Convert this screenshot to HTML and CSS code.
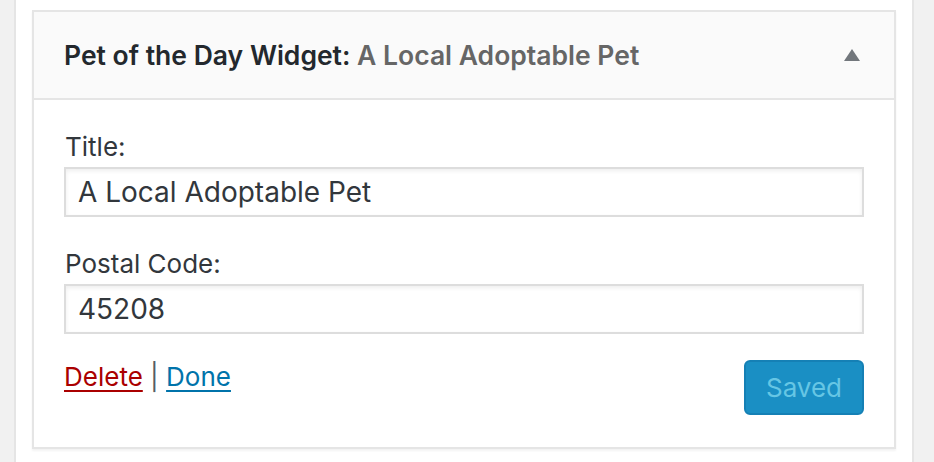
FILE: index.html
```html
<!DOCTYPE html>
<html>
<head>
<meta charset="utf-8">
<link rel="stylesheet" href="styles.css">
</head>
<body>
<div class="sidebar">
  <div class="widget">
    <div class="widget-top">
      <h3 class="widget-title">Pet of the Day Widget:<span class="in-title"> A Local Adoptable Pet</span></h3>
      <span class="toggle" aria-hidden="true"></span>
    </div>
    <div class="widget-inside">
      <label class="field-label" for="t">Title:</label>
      <input class="field" id="t" type="text" value="A Local Adoptable Pet">
      <label class="field-label second" for="p">Postal Code:</label>
      <input class="field" id="p" type="text" value="45208">
      <div class="widget-control">
        <div class="actions"><a class="delete" href="#">Delete</a><span class="sep"> | </span><a class="done" href="#">Done</a></div>
        <button class="save" disabled>Saved</button>
      </div>
    </div>
  </div>
</div>
</body>
</html>
```
FILE: styles.css
```css
html, body {
  margin: 0;
  padding: 0;
  height: 100%;
}
body {
  background: #f1f1f1;
  font-family: Inter, "Liberation Sans", sans-serif;
  color: #23282d;
}
.sidebar {
  box-sizing: border-box;
  margin-left: 14px;
  width: 900px;
  height: 100%;
  background: #fff;
  border-left: 2px solid #e5e5e5;
  border-right: 2px solid #e5e5e5;
  padding: 10px 16px 0 16px;
}
.widget {
  box-sizing: border-box;
  width: 864px;
  border: 2px solid #e5e5e5;
  box-shadow: 0 2px 2px rgba(0,0,0,.05);
  background: #fff;
}
.widget-top {
  box-sizing: border-box;
  height: 88px;
  background: #fafafa;
  border-bottom: 2px solid #e5e5e5;
  display: flex;
  align-items: center;
  justify-content: space-between;
  padding: 0 34px 0 30px;
}
.widget-title {
  margin: 0;
  font-size: 26.5px;
  font-weight: 600;
  color: #23282d;
}
.in-title {
  color: #666;
}
.toggle {
  width: 0;
  height: 0;
  border-left: 8px solid transparent;
  border-right: 8px solid transparent;
  border-bottom: 12px solid #72777c;
}
.widget-inside {
  padding: 32px 30px 32px 30px;
  display: flex;
  flex-direction: column;
}
.field-label {
  font-size: 26px;
  line-height: 30px;
  color: #32373c;
  margin-left: 1px;
}
.field-label.second {
  margin-top: 32px;
}
.field {
  box-sizing: border-box;
  margin: 5px 0 0 0;
  width: 800px;
  height: 50px;
  border: 2px solid #ddd;
  box-shadow: inset 0 2px 4px rgba(0,0,0,.07);
  padding: 0 12px;
  font-family: Inter, "Liberation Sans", sans-serif;
  font-size: 28px;
  color: #32373c;
  background: #fff;
  outline: none;
}
.widget-control {
  margin-top: 26px;
  display: flex;
  justify-content: space-between;
  align-items: flex-start;
}
.actions {
  font-size: 26px;
  line-height: 30px;
  margin-top: 2px;
  color: #555d66;
}
.actions a {
  text-decoration: underline;
  text-decoration-thickness: 2px;
  text-underline-offset: 4px;
}
.delete { color: #a00; }
.done { color: #0073aa; }
.save {
  box-sizing: border-box;
  width: 120px;
  height: 55px;
  border: 2px solid #1580b5;
  border-radius: 6px;
  background: #1a8fc4;
  color: #66c6e4;
  font-family: Inter, "Liberation Sans", sans-serif;
  font-size: 26px;
  padding: 0;
}
```
